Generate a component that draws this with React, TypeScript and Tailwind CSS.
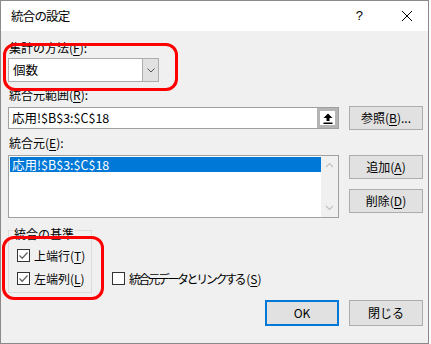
import React from "react";

const U = ({ c }: { c: string }) => <span className="underline underline-offset-2">{c}</span>;

const Btn = ({ children, primary, tall }: { children: React.ReactNode; primary?: boolean; tall?: boolean }) => (
  <div
    className={
      "w-[74px] flex items-center justify-center bg-[#e1e1e1] text-[12px] text-black " +
      (tall ? "h-[26px] " : "h-[24px] ") +
      (primary ? "border-2 border-[#0078d7]" : "border border-[#adadad]")
    }
  >
    {children}
  </div>
);

const Check = ({ checked }: { checked?: boolean }) => (
  <div className="w-[13px] h-[13px] border border-[#333333] bg-white flex items-center justify-center shrink-0">
    {checked && (
      <svg width="11" height="11" viewBox="0 0 11 11">
        <path d="M1.5 5.5 L4.2 8.2 L9.5 2.5" fill="none" stroke="#666666" strokeWidth="1.3" />
      </svg>
    )}
  </div>
);

const Chevron = ({ up }: { up?: boolean }) => (
  <svg width="9" height="6" viewBox="0 0 9 6">
    <path d={up ? "M1 5 L4.5 1.5 L8 5" : "M1 1 L4.5 4.5 L8 1"} fill="none" stroke="#c2c2c2" strokeWidth="1.2" />
  </svg>
);

export default function App() {
  return (
    <div className="w-[431px] h-[344px] bg-white font-['Noto_Sans_CJK_JP','Liberation_Sans',sans-serif] text-[12px] leading-[14px] text-black">
      <div className="w-[429px] h-[344px] border border-[#8a8a8a] flex flex-col">
        {/* title bar */}
        <div className="h-[30px] bg-white flex items-center shrink-0">
          <span className="ml-[10px] text-[12.5px] tracking-[-0.8px]">統合の設定</span>
          <span className="ml-auto mr-[38px] text-[13px] font-['Liberation_Sans',sans-serif]">?</span>
          <svg width="12" height="12" viewBox="0 0 12 12" className="mr-[15px]">
            <path d="M1 1 L11 11 M11 1 L1 11" stroke="#000" strokeWidth="1" />
          </svg>
        </div>

        {/* body */}
        <div className="relative flex-1 bg-[#f0f0f0] pl-[7px] pt-[10px]">
          <div className="ml-[1px]">
            集計の方法(<U c="F" />):
          </div>
          <div className="mt-[3px] w-[151px] h-[24px] flex border border-[#adadad] bg-white">
            <span className="flex-1 flex items-center pl-[4px] text-[12.5px]">個数</span>
            <div className="w-[16px] bg-[#e1e1e1] border-l border-[#adadad] flex items-center justify-center">
              <svg width="8" height="5" viewBox="0 0 8 5">
                <path d="M0.5 0.5 L4 4 L7.5 0.5" fill="none" stroke="#555" strokeWidth="1" />
              </svg>
            </div>
          </div>

          <div className="mt-[6px] ml-[1px]">
            統合元範囲(<U c="R" />):
          </div>
          <div className="mt-[4px] flex items-center">
            <div className="w-[331px] h-[22px] flex border border-[#a0a0a0] bg-white">
              <span className="flex-1 flex items-center pl-[3px] text-[12.5px]">応用!$B$3:$C$18</span>
              <div className="w-[21px] h-full border-[3px] border-[#b4b4b4] bg-white flex items-center justify-center">
                <svg width="10" height="11" viewBox="0 0 10 11">
                  <path d="M5 0.5 L9.5 5 L6.5 5 L6.5 8 L3.5 8 L3.5 5 L0.5 5 Z" fill="#000" />
                  <rect x="0.5" y="9.5" width="9" height="1.5" fill="#000" />
                </svg>
              </div>
            </div>
            <div className="ml-[10px]">
              <Btn>
                参照(<U c="B" />)...
              </Btn>
            </div>
          </div>

          <div className="mt-[6px] ml-[1px]">
            統合元(<U c="E" />):
          </div>
          <div className="mt-[5px] flex">
            <div className="w-[331px] h-[63px] flex border border-[#a0a0a0] bg-white">
              <div className="flex-1 pl-[1px] pt-[1px]">
                <div className="h-[15px] bg-[#0078d7] text-white flex items-center pl-[2px] text-[12.5px]">
                  応用!$B$3:$C$18
                </div>
              </div>
              <div className="w-[17px] bg-[#f0f0f0] flex flex-col items-center justify-between py-[6px]">
                <Chevron up />
                <Chevron />
              </div>
            </div>
            <div className="ml-[10px] flex flex-col gap-[10px]">
              <Btn>
                追加(<U c="A" />)
              </Btn>
              <Btn>
                削除(<U c="D" />)
              </Btn>
            </div>
          </div>

          <div className="mt-[12px] flex items-end">
            <div className="relative w-[84px] h-[63px] border border-[#dcdcdc]">
              <span className="absolute left-[4px] top-[-4px] bg-[#f0f0f0] px-[1px]">統合の基準</span>
              <div className="mt-[18px] ml-[8px] flex flex-col gap-[10px]">
                <div className="flex items-center gap-[4px] h-[13px]">
                  <Check checked />
                  <span>
                    上端行(<U c="T" />)
                  </span>
                </div>
                <div className="flex items-center gap-[4px] h-[13px]">
                  <Check checked />
                  <span>
                    左端列(<U c="L" />)
                  </span>
                </div>
              </div>
            </div>
            <div className="ml-[20px] mb-[8px] flex items-center gap-[4px] h-[13px]">
              <Check />
              <span>
                <span className="tracking-[-2.4px]">統合元データとリンクする</span>
                <span className="ml-[2px]">
                  (<U c="S" />)
                </span>
              </span>
            </div>
          </div>

          <div className="mt-[7px] flex justify-end gap-[10px] pr-[5px]">
            <Btn primary tall>
              OK
            </Btn>
            <Btn tall>閉じる</Btn>
          </div>

          {/* red highlight frames */}
          <div className="absolute left-[2px] top-[12px] w-[175px] h-[48px] border-[3px] border-[#ff0000] rounded-[12px]" />
          <div className="absolute left-[1px] top-[205px] w-[102px] h-[64px] border-[3px] border-[#ff0000] rounded-[12px]" />
        </div>
      </div>
    </div>
  );
}
